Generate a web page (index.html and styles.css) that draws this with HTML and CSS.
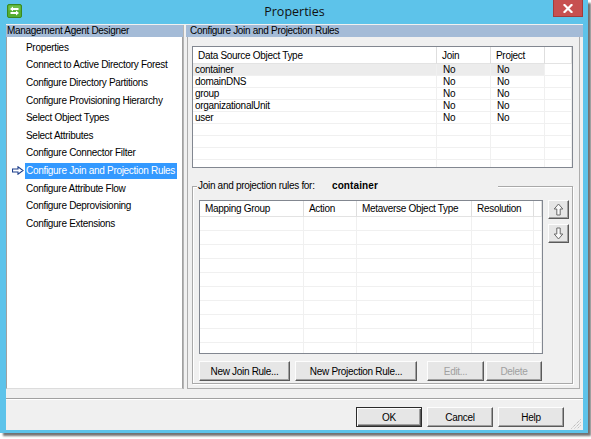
FILE: index.html
```html
<!DOCTYPE html>
<html>
<head>
<meta charset="utf-8">
<link rel="stylesheet" href="styles.css">
</head>
<body>
<div class="window">
  <div class="titlebar">
    <div class="app-icon">
      <svg width="15" height="14" viewBox="0 0 15 14">
        <rect x="0.5" y="0.5" width="14" height="13" rx="1.5" fill="#55ad32" stroke="#3a8a1f"/>
        <rect x="1.5" y="1.5" width="12" height="5" rx="1" fill="#7cc955" opacity="0.6"/>
        <path d="M3 5 L6 2.5 V4 H11.5 V6 H6 V7.5 Z" fill="#fff"/>
        <path d="M12 9 L9 6.5 V8 H3.5 V10 H9 V11.5 Z" fill="#fff"/>
      </svg>
    </div>
    <div class="title">Properties</div>
    <div class="close">
      <svg width="10" height="9" viewBox="0 0 10 9">
        <path d="M1.5 1 L8.5 8 M8.5 1 L1.5 8" stroke="#fff" stroke-width="2.2" stroke-linecap="square"/>
      </svg>
    </div>
  </div>
  <div class="client">
    <div class="panes">
      <div class="left">
        <div class="pane-head">Management Agent Designer</div>
        <ul class="nav">
          <li><span class="mark"></span><span class="txt">Properties</span></li>
          <li><span class="mark"></span><span class="txt">Connect to Active Directory Forest</span></li>
          <li><span class="mark"></span><span class="txt">Configure Directory Partitions</span></li>
          <li><span class="mark"></span><span class="txt">Configure Provisioning Hierarchy</span></li>
          <li><span class="mark"></span><span class="txt">Select Object Types</span></li>
          <li><span class="mark"></span><span class="txt">Select Attributes</span></li>
          <li><span class="mark"></span><span class="txt">Configure Connector Filter</span></li>
          <li class="sel"><span class="mark"><svg width="12" height="9" viewBox="0 0 12 9"><path d="M0.5 3 H6 V0.8 L11 4.5 L6 8.2 V6 H0.5 Z" fill="#fff" stroke="#1d3f8c" stroke-width="1.1"/></svg></span><span class="txt">Configure Join and Projection Rules</span></li>
          <li><span class="mark"></span><span class="txt">Configure Attribute Flow</span></li>
          <li><span class="mark"></span><span class="txt">Configure Deprovisioning</span></li>
          <li><span class="mark"></span><span class="txt">Configure Extensions</span></li>
        </ul>
      </div>
      <div class="splitter"></div>
      <div class="right">
        <div class="pane-head rhead">Configure Join and Projection Rules</div>
        <div class="panel">
          <div class="lv top-lv">
            <div class="row head"><div>Data Source Object Type</div><div>Join</div><div>Project</div><div></div></div>
            <div class="row cur"><div>container</div><div>No</div><div>No</div><div></div></div>
            <div class="row"><div>domainDNS</div><div>No</div><div>No</div><div></div></div>
            <div class="row"><div>group</div><div>No</div><div>No</div><div></div></div>
            <div class="row"><div>organizationalUnit</div><div>No</div><div>No</div><div></div></div>
            <div class="row"><div>user</div><div>No</div><div>No</div><div></div></div>
            <div class="row"><div></div><div></div><div></div><div></div></div>
            <div class="row"><div></div><div></div><div></div><div></div></div>
            <div class="row"><div></div><div></div><div></div><div></div></div>
            <div class="row"><div></div><div></div><div></div><div></div></div>
          </div>
          <div class="group">
            <div class="group-label"><span class="gl-text">Join and projection rules for:</span><span class="gl-val">container</span></div>
            <div class="group-body">
              <div class="lv map-lv">
                <div class="row head"><div>Mapping Group</div><div>Action</div><div>Metaverse Object Type</div><div>Resolution</div><div></div></div>
                <div class="row"><div></div><div></div><div></div><div></div><div></div></div>
                <div class="row"><div></div><div></div><div></div><div></div><div></div></div>
                <div class="row"><div></div><div></div><div></div><div></div><div></div></div>
                <div class="row"><div></div><div></div><div></div><div></div><div></div></div>
                <div class="row"><div></div><div></div><div></div><div></div><div></div></div>
                <div class="row"><div></div><div></div><div></div><div></div><div></div></div>
                <div class="row"><div></div><div></div><div></div><div></div><div></div></div>
                <div class="row"><div></div><div></div><div></div><div></div><div></div></div>
                <div class="row"><div></div><div></div><div></div><div></div><div></div></div>
                <div class="row"><div></div><div></div><div></div><div></div><div></div></div>
              </div>
              <div class="side">
                <div class="btn sq">
                  <svg width="11" height="13" viewBox="0 0 11 13"><path d="M5.5 1 L9.8 6 H7.2 V12 H3.8 V6 H1.2 Z" fill="#fafafa" stroke="#6a6a6a" stroke-width="1"/></svg>
                </div>
                <div class="btn sq">
                  <svg width="11" height="13" viewBox="0 0 11 13"><path d="M5.5 12 L9.8 7 H7.2 V1 H3.8 V7 H1.2 Z" fill="#fafafa" stroke="#6a6a6a" stroke-width="1"/></svg>
                </div>
              </div>
            </div>
            <div class="rule-btns">
              <div class="btn b-join">New Join Rule...</div>
              <div class="btn b-proj">New Projection Rule...</div>
              <div class="btn dis b-edit">Edit...</div>
              <div class="btn dis b-del">Delete</div>
            </div>
          </div>
        </div>
      </div>
    </div>
    <div class="footer">
      <div class="sep"></div>
      <div class="foot-row">
        <div class="btn fbtn def">OK</div>
        <div class="btn fbtn">Cancel</div>
        <div class="btn fbtn">Help</div>
        <div class="grip">
          <svg width="10" height="10" viewBox="0 0 10 10">
            <path d="M9.5 0.5 L0.5 9.5 M9.5 3.5 L3.5 9.5 M9.5 6.5 L6.5 9.5" stroke="#a8a8a8" stroke-width="1" stroke-dasharray="1 1"/>
          </svg>
        </div>
      </div>
    </div>
  </div>
</div>
</body>
</html>
```
FILE: styles.css
```css
* { box-sizing: border-box; }
html, body { margin: 0; padding: 0; background: #fff; }
body {
  width: 591px;
  height: 439px;
  overflow: hidden;
  font-family: "Liberation Sans", Arial, sans-serif;
  font-size: 10px;
  letter-spacing: -0.3px;
  color: #000;
}
.window {
  width: 588px;
  height: 433px;
  background: #5dc3ea;
  box-shadow: 3px 3px 2px rgba(0, 0, 0, 0.55);
  padding: 0 5px 3px 6px;
  display: flex;
  flex-direction: column;
}
.titlebar {
  height: 24px;
  flex: none;
  display: grid;
  grid-template-columns: 1fr auto 1fr;
  align-items: start;
}
.app-icon { justify-self: start; margin: 4px 0 0 1px; height: 14px; }
.app-icon svg { display: block; }
.title {
  font-family: "Open Sans", "Noto Sans", sans-serif;
  font-size: 12.5px;
  letter-spacing: 0;
  line-height: 24px;
  color: #111;
}
.close {
  justify-self: end;
  width: 30px;
  height: 17px;
  background: #c75050;
  border: 1px solid #a33b3b;
  border-top: none;
  display: flex;
  align-items: center;
  justify-content: center;
}
.close svg { display: block; }
.client {
  height: 406px;
  background: #f0f0f0;
  display: flex;
  flex-direction: column;
}
.panes {
  height: 365px;
  padding-top: 1px;
  display: flex;
}
.left {
  width: 177px;
  display: flex;
  flex-direction: column;
}
.pane-head {
  height: 12px;
  line-height: 12px;
  background: #a4bbd7;
  padding-left: 1px;
  white-space: nowrap;
  overflow: hidden;
  flex: none;
}
.rhead { padding-left: 4px; }
.nav {
  flex: 1;
  list-style: none;
  margin: 0;
  padding: 2px 0 0 0;
  background: #fff;
  border-left: 1px solid #a0a0a0;
  border-right: 1px solid #a0a0a0;
  border-bottom: 1px solid #dcdcdc;
}
.nav li {
  height: 17.6px;
  display: flex;
  align-items: center;
  white-space: nowrap;
}
.mark {
  width: 18px;
  flex: none;
  padding-left: 5px;
  display: flex;
  align-items: center;
}
.mark svg { display: block; }
.txt {
  padding: 0 2px 0 1px;
  line-height: 16px;
  height: 16px;
}
.sel .txt { background: #3399ff; color: #fff; }
.splitter { width: 3px; flex: none; border-left: 1px solid #b5b5b5; }
.right {
  flex: 1;
  display: flex;
  flex-direction: column;
}
.panel {
  flex: 1;
  margin: 0 3px 0 1px;
  border: 1px solid #adadad;
  border-top: none;
  padding: 9px 0 0 4px;
}
.lv {
  background: #fff;
  border: 1px solid #828790;
  overflow: hidden;
}
.row { display: grid; }
.row > div {
  border-right: 1px solid #f0f0f0;
  border-bottom: 1px solid #f0f0f0;
  white-space: nowrap;
  overflow: hidden;
}
.head > div {
  border-right-color: #dedede;
  border-bottom-color: #e3e3e3;
  padding-left: 5px;
}
.top-lv { width: 381px; height: 122px; }
.top-lv .row { grid-template-columns: 244px 54px 54px 1fr; }
.top-lv .row > div { height: 12px; line-height: 12px; padding-left: 6px; }
.top-lv .row > div:first-child { padding-left: 2px; }
.top-lv .head > div { height: 17px; line-height: 17px; padding-left: 5px; }
.top-lv .head > div:first-child { padding-left: 5px; }
.cur > div:nth-child(-n+3) { background: #ececec; }
.group {
  margin-top: 18px;
  width: 381px;
  height: 198px;
  border: 1px solid #a9a9a9;
  box-shadow: inset 1px 1px 0 #fff, 1px 1px 0 #fff;
  padding: 0 0 0 6px;
}
.group-label {
  display: flex;
  width: 301px;
  height: 12px;
  line-height: 12px;
  margin: -7px 0 0 -2px;
  padding-left: 1px;
  background: #f0f0f0;
  white-space: nowrap;
}
.gl-text { width: 134px; flex: none; }
.gl-val { font-weight: bold; letter-spacing: 0.1px; }
.group-body {
  display: flex;
  margin-top: 8px;
}
.map-lv { width: 344px; height: 154px; flex: none; }
.map-lv .row { grid-template-columns: 104px 53px 115px 62px 1fr; }
.map-lv .row > div { height: 14px; }
.map-lv .head > div { height: 16px; line-height: 16px; }
.side {
  margin-left: 5px;
  display: flex;
  flex-direction: column;
  gap: 5px;
}
.btn {
  height: 20px;
  background: #e6e6e6;
  border: 1px solid;
  border-color: #fdfdfd #5a5a5a #5a5a5a #fdfdfd;
  box-shadow: inset -1px -1px 0 #a0a0a0;
  display: flex;
  align-items: center;
  justify-content: center;
  white-space: nowrap;
  color: #000;
}
.btn.sq { width: 21px; height: 19px; }
.btn.sq svg { display: block; }
.dis { color: #a0a0a0; }
.rule-btns {
  display: flex;
  margin-top: 7px;
}
.b-join { width: 91px; }
.b-proj { width: 122px; margin-left: 5px; }
.b-edit { width: 57px; margin-left: 10px; }
.b-del { width: 56px; margin-left: 2px; }
.footer {
  flex: 1;
  display: flex;
  flex-direction: column;
  padding-top: 9px;
}
.sep {
  height: 2px;
  border-top: 1px solid #a0a0a0;
  border-bottom: 1px solid #fff;
}
.foot-row {
  flex: 1;
  display: flex;
  align-items: flex-start;
  justify-content: flex-end;
  padding-top: 7px;
  padding-right: 2px;
}
.fbtn { width: 66px; margin-left: 5px; }
.def {
  border-color: #2b2b2b;
  box-shadow: inset 1px 1px 0 #fdfdfd, inset -1px -1px 0 #5a5a5a, inset -2px -2px 0 #a0a0a0;
}
.grip {
  align-self: flex-end;
  margin-left: 7px;
  width: 10px;
  height: 10px;
  margin-bottom: 1px;
}
.grip svg { display: block; }
```
